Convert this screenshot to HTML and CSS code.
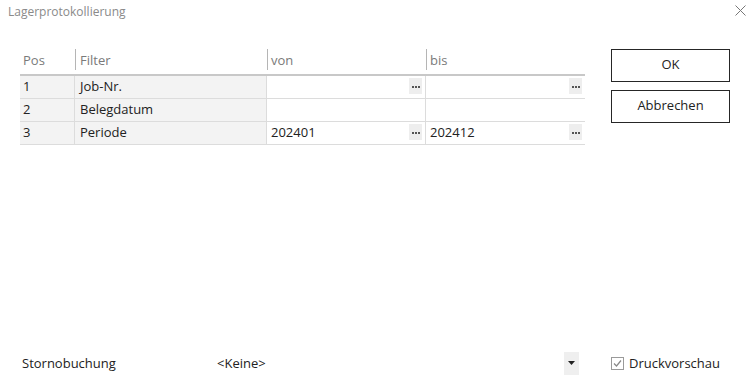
FILE: index.html
```html
<!DOCTYPE html>
<html>
<head>
<meta charset="utf-8">
<link rel="stylesheet" href="styles.css">
</head>
<body>
<div class="dialog">
  <div class="titlebar">
    <span class="title">Lagerprotokollierung</span>
    <svg class="close" width="11" height="11" viewBox="0 0 11 11"><path d="M0.5 0.5L10.5 10.5M10.5 0.5L0.5 10.5" stroke="#777" stroke-width="1"/></svg>
  </div>
  <div class="main">
    <div class="grid">
      <div class="row head">
        <div class="cell pos"><span>Pos</span></div>
        <div class="cell filter"><span>Filter</span></div>
        <div class="cell von"><span>von</span></div>
        <div class="cell bis"><span>bis</span></div>
      </div>
      <div class="row">
        <div class="cell pos ro">1</div>
        <div class="cell filter ro">Job-Nr.</div>
        <div class="cell von"><span class="val"></span><span class="dots"><svg width="8" height="2" viewBox="0 0 8 2"><rect x="0" y="0" width="2" height="2" fill="#555"/><rect x="3" y="0" width="2" height="2" fill="#555"/><rect x="6" y="0" width="2" height="2" fill="#555"/></svg></span></div>
        <div class="cell bis"><span class="val"></span><span class="dots"><svg width="8" height="2" viewBox="0 0 8 2"><rect x="0" y="0" width="2" height="2" fill="#555"/><rect x="3" y="0" width="2" height="2" fill="#555"/><rect x="6" y="0" width="2" height="2" fill="#555"/></svg></span></div>
      </div>
      <div class="row">
        <div class="cell pos ro">2</div>
        <div class="cell filter ro">Belegdatum</div>
        <div class="cell von"></div>
        <div class="cell bis"></div>
      </div>
      <div class="row">
        <div class="cell pos ro">3</div>
        <div class="cell filter ro">Periode</div>
        <div class="cell von"><span class="val">202401</span><span class="dots"><svg width="8" height="2" viewBox="0 0 8 2"><rect x="0" y="0" width="2" height="2" fill="#555"/><rect x="3" y="0" width="2" height="2" fill="#555"/><rect x="6" y="0" width="2" height="2" fill="#555"/></svg></span></div>
        <div class="cell bis"><span class="val">202412</span><span class="dots"><svg width="8" height="2" viewBox="0 0 8 2"><rect x="0" y="0" width="2" height="2" fill="#555"/><rect x="3" y="0" width="2" height="2" fill="#555"/><rect x="6" y="0" width="2" height="2" fill="#555"/></svg></span></div>
      </div>
    </div>
    <div class="buttons">
      <button class="btn">OK</button>
      <button class="btn">Abbrechen</button>
    </div>
  </div>
  <div class="bottom">
    <span class="label">Stornobuchung</span>
    <div class="combo">
      <span class="combo-val">&lt;Keine&gt;</span>
      <span class="combo-btn"><svg width="7" height="4" viewBox="0 0 7 4"><path d="M0 0H7L3.5 4Z" fill="#222"/></svg></span>
    </div>
    <label class="check">
      <span class="box"><svg width="11" height="11" viewBox="0 0 11 11"><path d="M2 5.5L4.5 8L9 2.5" stroke="#888" stroke-width="1.2" fill="none"/></svg></span>
      <span>Druckvorschau</span>
    </label>
  </div>
</div>
</body>
</html>
```
FILE: styles.css
```css
* { box-sizing: border-box; }
html, body { margin: 0; padding: 0; background: #fff; }
body {
  font-family: "Open Sans", "Noto Sans", sans-serif;
  font-size: 13px;
  color: #222;
  width: 750px;
  height: 392px;
  overflow: hidden;
}
.dialog {
  display: flex;
  flex-direction: column;
  height: 392px;
}
.titlebar {
  display: flex;
  justify-content: space-between;
  align-items: flex-start;
  height: 26px;
  padding: 4px 4px 0 8px;
}
.title { font-size: 12px; color: #8a8a8a; line-height: 16px; }
.close { display: block; margin-top: 1px; }
.main {
  display: flex;
  padding: 23px 20px 0 20px;
  flex: 1;
}
.grid {
  width: 565px;
  display: flex;
  flex-direction: column;
}
.row {
  display: flex;
  height: 23px;
  border-bottom: 1px solid #dcdcdc;
}
.row.head {
  height: 27px;
  border-bottom: 2px solid #c8c8c8;
  color: #7a7a7a;
}
.cell {
  display: flex;
  align-items: center;
  padding-left: 4px;
  padding-bottom: 2px;
  border-right: 1px solid #dcdcdc;
}
.row.head .cell {
  border-right: none;
  border-left: 1px solid #b5b5b5;
  padding-left: 3px;
  padding-bottom: 0;
  align-items: flex-start;
  padding-top: 1px;
  margin-bottom: 4px;
}
.row.head .cell:first-child { border-left: none; padding-left: 3px; }
.row.head .cell span { line-height: 20px; }
.pos { width: 55px; padding-left: 3px; }
.filter { width: 192px; padding-left: 5px; }
.von { width: 159px; }
.bis { width: 159px; border-right: none; }
.row.head .filter { padding-left: 4px; }
.ro { background: #f3f3f3; }
.val { flex: 1; }
.dots {
  width: 13px;
  height: 16px;
  background: #eeeeee;
  display: flex;
  align-items: center;
  justify-content: center;
  margin-right: 3px;
  padding-top: 2px;
}
.dots svg { display: block; }
.buttons {
  margin-left: 26px;
  display: flex;
  flex-direction: column;
  gap: 8px;
}
.btn {
  width: 119px;
  height: 33px;
  background: #fff;
  border: 1px solid #262626;
  font-family: "Open Sans", "Noto Sans", sans-serif;
  font-size: 13px;
  color: #222;
  padding: 0 0 3px 0;
}
.bottom {
  display: flex;
  align-items: center;
  height: 42px;
  padding: 0 0 16px 22px;
}
.label { width: 195px; }
.combo {
  display: flex;
  align-items: center;
  width: 362px;
  height: 23px;
}
.combo-val { flex: 1; }
.combo-btn {
  width: 15px;
  height: 23px;
  background: #efefef;
  display: flex;
  align-items: center;
  justify-content: center;
}
.combo-btn svg { display: block; }
.check {
  display: flex;
  align-items: center;
  margin-left: 32px;
  gap: 5px;
}
.box {
  width: 13px;
  height: 13px;
  border: 1px solid #9a9a9a;
  display: flex;
  align-items: center;
  justify-content: center;
}
.box svg { display: block; }
```
